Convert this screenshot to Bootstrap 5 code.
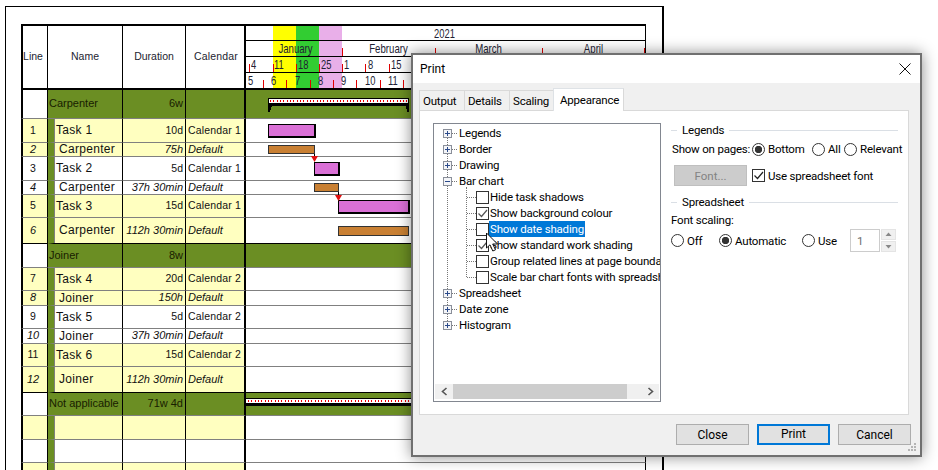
<!DOCTYPE html>
<html lang="en">
<head>
<meta charset="utf-8">
<title>Print</title>
<link href="https://cdn.jsdelivr.net/npm/bootstrap@5.3.0/dist/css/bootstrap.min.css" rel="stylesheet">
<style>
html,body{margin:0;background:#fff}
.stage{position:relative;width:938px;height:470px;overflow:hidden;background:#fff;font-family:"Liberation Sans",Arial,sans-serif;color:#111}
.sheet{margin:6px 0 0 5px;width:659px;height:520px;border:solid #000;border-width:1px 2px 0 1px;padding:17px 0 0 15px}
.sched{table-layout:fixed;width:625px;border-collapse:separate;border-spacing:0;font-size:10.5px;line-height:1}
.sched th,.sched td{padding:0 0 1px;border-bottom:1px solid #808080;border-right:1px solid #000;vertical-align:middle;white-space:nowrap;overflow:hidden;font-weight:400}
.sched thead th{border-top:2px solid #000;border-bottom:2px solid #000;text-align:center;color:#1c2430;padding-bottom:2px}
.sched thead th.c-chart{padding:0}
.c-line{border-left:2px solid #000;text-align:center;padding-right:4px!important}
.c-cal{padding-left:2px!important;border-right-width:2px!important;letter-spacing:.15px}
.c-dur{text-align:right;padding-right:2px!important}
.c-chart{background:#fff}
.c-name{font-size:12px;letter-spacing:.3px}
tr.h14{height:14px}tr.h15{height:15px}tr.h23{height:23px}tr.h24{height:24px}tr.h26{height:26px}tr.h29{height:29px}tr.h66{height:66px}
tr.yl td:not(.c-chart){background:#ffffc0}
tr.task .c-name{border-left:6px solid #6b8e23;box-shadow:inset 1px 0 #808080;padding-left:2px}
tr.res .c-name{border-left:6px solid #6b8e23;box-shadow:inset 1px 0 #808080;padding-left:5px}
tr.res td{font-style:italic;font-size:11px}
tr.res .c-name{font-style:normal;font-size:12px}
tr.res .c-cal{letter-spacing:0}
tr.grp td:not(.c-line){background:#6b8e23;color:#182000}
tr.grp .c-name{font-size:11px;letter-spacing:0;padding-left:1px}
tr.grp .c-dur{font-size:11px}
tr.blk td{border-bottom-color:#000}
.hdr{position:relative;height:62px;font-size:13px;text-align:left;color:#223}
.hdr svg{position:absolute;left:0;top:0}
.hrow{position:relative;display:flex;border-bottom:1px solid #000;height:16px;line-height:16px}
.hrow.yr{height:15px;line-height:15px;justify-content:center;padding-right:3px}
.hrow.yr span{display:block;transform:scaleX(.72)}
.hrow.last{border-bottom:0;height:15px;line-height:16px}
.hrow.mo{padding-left:3px}
.hrow.wk{padding-left:3px}
.mn{text-align:center;flex:none;transform:scaleX(.74)}
.w93{width:93px}.w107{width:107px}.w103{width:103px}
.dt{flex:none;width:23.33px;padding-left:2px;transform:scaleX(.72);transform-origin:2px 50%}
.bars{position:absolute;left:0;top:0;z-index:2;pointer-events:none}
/* dialog */
.dlg{position:absolute;left:411px;top:53px;width:511px;height:404px;z-index:3;border:2px solid #707070;background:#f0f0f0;box-shadow:0 0 14px rgba(0,0,0,.45);font-family:Roboto,"Liberation Sans",sans-serif;font-size:11.5px;letter-spacing:-.2px;color:#000;line-height:16px;white-space:nowrap}
.ttl{height:28px;background:#fff;padding:0 9px 0 7px;font-size:12px;letter-spacing:0}
.xbtn{border:0;background:none;padding:0;width:12px;height:12px;line-height:0}
.tabs{margin:6px 0 0 6px;padding:0;border:0;height:21px;flex-wrap:nowrap;position:relative;z-index:1}
.tabs .nav-link{margin:0;height:20px;margin-top:1px;padding:2px 4px 0 3px;border:1px solid #d9d9d9;border-bottom:0;border-right:0;border-radius:0;color:#000;background:#f0f0f0;font-size:11.5px;line-height:16px}
.tabs .nav-link.active{margin-top:-1px;padding:3px 7px 0 6px;background:#fff;border-right:1px solid #d9d9d9;height:23px}
.t44{width:45px}.t45{width:45px}.t43{width:44px}.t71{width:71px}
.pane{margin:0 11px 0 6px;height:305px;background:#fff;border:1px solid #d9d9d9;padding:12px 0 0 13px;gap:10px}
.tree{width:228px;height:279px;border:1px solid #828790;flex:none}
.trows{position:relative;height:259px;padding-top:1px;overflow:hidden;white-space:nowrap}
.vdot{position:absolute;border-left:1px dotted #777}
.vd1{left:13px;top:13px;height:184px}
.vd2{left:32px;top:63px;height:90px}
.tr16{height:16px;padding-left:9px}
.tr16.kid{padding-left:33px}
.pm{flex:none;width:9px;height:9px;border:1px solid #8a8f9a;background:#f4f5f8;line-height:0;position:relative}
.pm svg{position:absolute;left:0;top:0}
.hd{flex:none;width:5px;border-top:1px dotted #777;margin:0 1px 0 0}
.hd.w9{width:9px;margin:0}
.tick{flex:none;display:inline-block;width:13px;height:13px;border:1px solid #333;background:#fff;line-height:0}
.lbl{padding:0 1px;margin-left:0;height:16px}
.lbl.sel{background:#0078d7;color:#fff}
.sbar{height:15px;margin:1px;background:#f0f0f0;padding:0}
.sbtn{flex:none;width:18px;line-height:0;text-align:center}
.thumb{width:174px;background:#cdcdcd;height:15px}
.rcol{width:227px;flex:none}
.grph{height:14px;gap:5px;line-height:14px}
.grph i{display:block;border-top:1px solid #dadfe5}
.grph i.s{width:6px;flex:none}
.grph i.g{flex:1}
.fline{display:flex;align-items:center}
.form-check-input.rd{flex:none;width:13px;height:13px;margin:0;border:1px solid #333;background-color:#fff;background-image:none}
.form-check-input.rd:checked{background-color:#fff;border-color:#333;background-image:radial-gradient(circle,#333 3.4px,transparent 4px)}
.opt{display:flex;align-items:center;gap:3px;flex:none;margin:0}
.w80{width:80px;margin-left:1px;flex:none}.w60{width:60px}.w32{width:32px}.w48{width:48px}.w83{width:83px}
.m4{margin-top:4px;height:16px}
.m8{margin-top:8px}.m9{margin-top:9px}.m3{margin-top:3px}.m1{margin-top:1px}
.fbtn{width:73px;height:21px;margin:0 5px 0 3px;padding:0;background:#ccc;border:1px solid #bfbfbf;border-radius:0;color:#838383;font-size:11.5px;line-height:18px}
.fbtn:disabled{background:#ccc;border:1px solid #bfbfbf;color:#838383;opacity:1}
.spinv{width:30px;height:23px;border:1px solid #ccc;background:#fff;color:#6d6d6d;padding:0 0 0 6px;font-size:11.5px;border-radius:0;box-shadow:none}
.form-control.spinv:disabled{background:#fff}
.spn{margin-left:1px;width:15px;gap:1px}
.spn span{display:block;height:11px;background:#f0f0f0;border:1px solid #e4e4e4;line-height:0;text-align:center}
.foot{margin:9px 9px 0 0;gap:8px}
.dbtn{width:73px;height:21px;padding:0;background:#e1e1e1;border:1px solid #adadad;border-radius:0;color:#000;font-size:12px;line-height:18px;font-family:Roboto,"Liberation Sans",sans-serif}
.dbtn.def{border:2px solid #0078d7;line-height:17px}
.grip{position:absolute;right:3px;bottom:3px}
.cursor{position:absolute;left:485px;top:232px;z-index:4}
</style>
</head>
<body>
<div class="stage">
  <div class="sheet">
    <table class="sched">
      <colgroup><col width="27"><col width="75"><col width="63"><col width="60"><col width="400"></colgroup>
      <thead>
        <tr class="h66">
          <th class="c-line">Line</th><th>Name</th><th>Duration</th><th class="c-cal">Calendar</th>
          <th class="c-chart">
            <div class="hdr">
              <svg width="399" height="62" shape-rendering="crispEdges">
                <rect x="27" y="0" width="23" height="62" fill="#ffff00"/>
                <rect x="50" y="0" width="23" height="62" fill="#32cd32"/>
                <rect x="73" y="0" width="23" height="62" fill="#e9afe9"/>
                <g fill="#e00000">
                  <rect x="96" y="22" width="1" height="8"/><rect x="189" y="22" width="1" height="8"/><rect x="296" y="22" width="1" height="8"/><rect x="398" y="22" width="1" height="8"/>
                  <rect x="3" y="38" width="1" height="8"/><rect x="27" y="38" width="1" height="8"/><rect x="50" y="38" width="1" height="8"/><rect x="73" y="38" width="1" height="8"/><rect x="96" y="38" width="1" height="8"/><rect x="119" y="38" width="1" height="8"/><rect x="143" y="38" width="1" height="8"/>
                  <rect x="17" y="54" width="1" height="8"/><rect x="40" y="54" width="1" height="8"/><rect x="64" y="54" width="1" height="8"/><rect x="87" y="54" width="1" height="8"/><rect x="110" y="54" width="1" height="8"/><rect x="134" y="54" width="1" height="8"/><rect x="157" y="54" width="1" height="8"/>
                </g>
              </svg>
              <div class="hrow yr"><span>2021</span></div>
              <div class="hrow mo"><span class="mn w93">January</span><span class="mn w93">February</span><span class="mn w107">March</span><span class="mn w103">April</span></div>
              <div class="hrow wk"><span class="dt">4</span><span class="dt">11</span><span class="dt">18</span><span class="dt">25</span><span class="dt">1</span><span class="dt">8</span><span class="dt">15</span></div>
              <div class="hrow last"><span class="dt">5</span><span class="dt">6</span><span class="dt">7</span><span class="dt">8</span><span class="dt">9</span><span class="dt">10</span><span class="dt">11</span><span class="dt">12</span></div>
            </div>
          </th>
        </tr>
      </thead>
      <tbody>
        <tr class="h29 grp"><td class="c-line"></td><td class="c-name">Carpenter</td><td class="c-dur">6w</td><td class="c-cal"></td><td class="c-chart"></td></tr>
        <tr class="h24 yl task"><td class="c-line">1</td><td class="c-name">Task 1</td><td class="c-dur">10d</td><td class="c-cal">Calendar 1</td><td class="c-chart"></td></tr>
        <tr class="h14 yl res"><td class="c-line">2</td><td class="c-name">Carpenter</td><td class="c-dur">75h</td><td class="c-cal">Default</td><td class="c-chart"></td></tr>
        <tr class="h24 task"><td class="c-line">3</td><td class="c-name">Task 2</td><td class="c-dur">5d</td><td class="c-cal">Calendar 1</td><td class="c-chart"></td></tr>
        <tr class="h14 res"><td class="c-line">4</td><td class="c-name">Carpenter</td><td class="c-dur">37h 30min</td><td class="c-cal">Default</td><td class="c-chart"></td></tr>
        <tr class="h23 yl task"><td class="c-line">5</td><td class="c-name">Task 3</td><td class="c-dur">15d</td><td class="c-cal">Calendar 1</td><td class="c-chart"></td></tr>
        <tr class="h26 yl res blk"><td class="c-line">6</td><td class="c-name">Carpenter</td><td class="c-dur">112h 30min</td><td class="c-cal">Default</td><td class="c-chart"></td></tr>
        <tr class="h24 grp"><td class="c-line"></td><td class="c-name">Joiner</td><td class="c-dur">8w</td><td class="c-cal"></td><td class="c-chart"></td></tr>
        <tr class="h23 yl task"><td class="c-line">7</td><td class="c-name">Task 4</td><td class="c-dur">20d</td><td class="c-cal">Calendar 2</td><td class="c-chart"></td></tr>
        <tr class="h15 yl res"><td class="c-line">8</td><td class="c-name">Joiner</td><td class="c-dur">150h</td><td class="c-cal">Default</td><td class="c-chart"></td></tr>
        <tr class="h23 task"><td class="c-line">9</td><td class="c-name">Task 5</td><td class="c-dur">5d</td><td class="c-cal">Calendar 2</td><td class="c-chart"></td></tr>
        <tr class="h15 res"><td class="c-line">10</td><td class="c-name">Joiner</td><td class="c-dur">37h 30min</td><td class="c-cal">Default</td><td class="c-chart"></td></tr>
        <tr class="h23 yl task"><td class="c-line">11</td><td class="c-name">Task 6</td><td class="c-dur">15d</td><td class="c-cal">Calendar 2</td><td class="c-chart"></td></tr>
        <tr class="h26 yl res blk"><td class="c-line">12</td><td class="c-name">Joiner</td><td class="c-dur">112h 30min</td><td class="c-cal">Default</td><td class="c-chart"></td></tr>
        <tr class="h23 grp"><td class="c-line"></td><td class="c-name">Not applicable</td><td class="c-dur">71w 4d</td><td class="c-cal"></td><td class="c-chart"></td></tr>
        <tr class="h24 yl task"><td class="c-line"></td><td class="c-name"></td><td class="c-dur"></td><td class="c-cal"></td><td class="c-chart"></td></tr>
        <tr class="h23 task"><td class="c-line"></td><td class="c-name"></td><td class="c-dur"></td><td class="c-cal"></td><td class="c-chart"></td></tr>
        <tr class="h23 yl task"><td class="c-line"></td><td class="c-name"></td><td class="c-dur"></td><td class="c-cal"></td><td class="c-chart"></td></tr>
      </tbody>
    </table>
  </div>

  <svg class="bars" width="938" height="470">
    <g shape-rendering="crispEdges">
    <!-- Carpenter summary -->
    <rect x="268" y="98" width="141" height="8" fill="#000"/>
    <rect x="269" y="99" width="139" height="4" fill="#fff"/>
    <path d="M270 100h1v2h-1zM273 100h1v2h-1zM277 100h1v2h-1zM280 100h1v2h-1zM283 100h1v2h-1zM287 100h1v2h-1zM290 100h1v2h-1zM293 100h1v2h-1zM297 100h1v2h-1zM300 100h1v2h-1zM303 100h1v2h-1zM307 100h1v2h-1zM310 100h1v2h-1zM313 100h1v2h-1zM317 100h1v2h-1zM320 100h1v2h-1zM323 100h1v2h-1zM327 100h1v2h-1zM330 100h1v2h-1zM333 100h1v2h-1zM337 100h1v2h-1zM340 100h1v2h-1zM343 100h1v2h-1zM347 100h1v2h-1zM350 100h1v2h-1zM353 100h1v2h-1zM357 100h1v2h-1zM360 100h1v2h-1zM363 100h1v2h-1zM367 100h1v2h-1zM370 100h1v2h-1zM373 100h1v2h-1zM377 100h1v2h-1zM380 100h1v2h-1zM383 100h1v2h-1zM387 100h1v2h-1zM390 100h1v2h-1zM393 100h1v2h-1zM397 100h1v2h-1zM400 100h1v2h-1zM403 100h1v2h-1zM406 100h1v2h-1z" fill="#f00000"/>
    <path d="M268 104h4v2l-1 1v2l-1 1v2h-2zM409 104h-4v2l1 1v2l1 1v2h2z" fill="#000"/>
    <!-- Task 1 -->
    <rect x="268" y="124" width="48" height="14" fill="#000"/><rect x="269" y="125" width="45" height="11" fill="#da70d6"/>
    <rect x="268" y="145" width="47" height="9" fill="#333"/><rect x="269" y="146" width="45" height="7" fill="#c98033"/>
    <rect x="314" y="154" width="1" height="4" fill="#000"/>
    <!-- Task 2 -->
    <rect x="314" y="162" width="26" height="14" fill="#000"/><rect x="315" y="163" width="23" height="11" fill="#da70d6"/>
    <rect x="314" y="183" width="25" height="9" fill="#333"/><rect x="315" y="184" width="23" height="7" fill="#c98033"/>
    <rect x="338" y="192" width="1" height="3" fill="#000"/>
    <!-- Task 3 -->
    <rect x="338" y="200" width="72" height="14" fill="#000"/><rect x="339" y="201" width="69" height="11" fill="#da70d6"/>
    <rect x="338" y="226" width="71" height="10" fill="#333"/><rect x="339" y="227" width="69" height="8" fill="#c98033"/>
    <!-- Not applicable summary -->
    <rect x="246" y="398" width="399" height="8" fill="#000"/>
    <rect x="246" y="399" width="399" height="4" fill="#fff"/>
    <path d="M248 400h1v2h-1zM251 400h1v2h-1zM255 400h1v2h-1zM258 400h1v2h-1zM261 400h1v2h-1zM265 400h1v2h-1zM268 400h1v2h-1zM271 400h1v2h-1zM275 400h1v2h-1zM278 400h1v2h-1zM281 400h1v2h-1zM285 400h1v2h-1zM288 400h1v2h-1zM291 400h1v2h-1zM295 400h1v2h-1zM298 400h1v2h-1zM301 400h1v2h-1zM305 400h1v2h-1zM308 400h1v2h-1zM311 400h1v2h-1zM315 400h1v2h-1zM318 400h1v2h-1zM321 400h1v2h-1zM325 400h1v2h-1zM328 400h1v2h-1zM331 400h1v2h-1zM335 400h1v2h-1zM338 400h1v2h-1zM341 400h1v2h-1zM345 400h1v2h-1zM348 400h1v2h-1zM351 400h1v2h-1zM355 400h1v2h-1zM358 400h1v2h-1zM361 400h1v2h-1zM365 400h1v2h-1zM368 400h1v2h-1zM371 400h1v2h-1zM375 400h1v2h-1zM378 400h1v2h-1zM381 400h1v2h-1zM385 400h1v2h-1zM388 400h1v2h-1zM391 400h1v2h-1zM395 400h1v2h-1zM398 400h1v2h-1zM401 400h1v2h-1zM405 400h1v2h-1zM408 400h1v2h-1z" fill="#f00000"/>
    </g>
    <path d="M311 156h7l-3.500 6z" fill="#e01010"/>
    <path d="M335 195h7l-3.500 6z" fill="#e01010"/>
  </svg>

  <div class="dlg d-flex flex-column">
    <div class="ttl d-flex align-items-center justify-content-between">
      <span>Print</span>
      <button class="xbtn" type="button" aria-label="Close"><svg width="12" height="12" viewBox="0 0 12 12"><path d="M.5.500l11 11M11.500.500l-11 11" stroke="#111" stroke-width="1" fill="none"/></svg></button>
    </div>
    <ul class="nav nav-tabs tabs">
      <li class="nav-item"><a class="nav-link t44" href="#">Output</a></li>
      <li class="nav-item"><a class="nav-link t45" href="#">Details</a></li>
      <li class="nav-item"><a class="nav-link t43" href="#">Scaling</a></li>
      <li class="nav-item"><a class="nav-link active t71" href="#">Appearance</a></li>
    </ul>
    <div class="pane d-flex">
      <div class="tree d-flex flex-column">
        <div class="trows">
          <span class="vdot vd1"></span><span class="vdot vd2"></span>
          <div class="tr16 d-flex align-items-center"><span class="pm"><svg width="7" height="7"><path d="M1 3.500h5M3.500 1v5" stroke="#2b4a8b" fill="none"/></svg></span><span class="hd"></span><span class="lbl">Legends</span></div>
          <div class="tr16 d-flex align-items-center"><span class="pm"><svg width="7" height="7"><path d="M1 3.500h5M3.500 1v5" stroke="#2b4a8b" fill="none"/></svg></span><span class="hd"></span><span class="lbl">Border</span></div>
          <div class="tr16 d-flex align-items-center"><span class="pm"><svg width="7" height="7"><path d="M1 3.500h5M3.500 1v5" stroke="#2b4a8b" fill="none"/></svg></span><span class="hd"></span><span class="lbl">Drawing</span></div>
          <div class="tr16 d-flex align-items-center"><span class="pm"><svg width="7" height="7"><path d="M1 3.500h5" stroke="#2b4a8b" fill="none"/></svg></span><span class="hd"></span><span class="lbl">Bar chart</span></div>
          <div class="tr16 kid d-flex align-items-center"><span class="hd w9"></span><span class="tick"></span><span class="lbl">Hide task shadows</span></div>
          <div class="tr16 kid d-flex align-items-center"><span class="hd w9"></span><span class="tick"><svg width="11" height="11"><path d="M1.500 5.500l3 3 5.500-6.500" stroke="#555" stroke-width="1.200" fill="none"/></svg></span><span class="lbl">Show background colour</span></div>
          <div class="tr16 kid d-flex align-items-center"><span class="hd w9"></span><span class="tick"></span><span class="lbl sel">Show date shading</span></div>
          <div class="tr16 kid d-flex align-items-center"><span class="hd w9"></span><span class="tick"><svg width="11" height="11"><path d="M1.500 5.500l3 3 5.500-6.500" stroke="#555" stroke-width="1.200" fill="none"/></svg></span><span class="lbl">Show standard work shading</span></div>
          <div class="tr16 kid d-flex align-items-center"><span class="hd w9"></span><span class="tick"></span><span class="lbl">Group related lines at page bounda</span></div>
          <div class="tr16 kid d-flex align-items-center"><span class="hd w9"></span><span class="tick"></span><span class="lbl">Scale bar chart fonts with spreadsh</span></div>
          <div class="tr16 d-flex align-items-center"><span class="pm"><svg width="7" height="7"><path d="M1 3.500h5M3.500 1v5" stroke="#2b4a8b" fill="none"/></svg></span><span class="hd"></span><span class="lbl">Spreadsheet</span></div>
          <div class="tr16 d-flex align-items-center"><span class="pm"><svg width="7" height="7"><path d="M1 3.500h5M3.500 1v5" stroke="#2b4a8b" fill="none"/></svg></span><span class="hd"></span><span class="lbl">Date zone</span></div>
          <div class="tr16 d-flex align-items-center"><span class="pm"><svg width="7" height="7"><path d="M1 3.500h5M3.500 1v5" stroke="#2b4a8b" fill="none"/></svg></span><span class="hd"></span><span class="lbl">Histogram</span></div>
        </div>
        <div class="sbar d-flex align-items-center justify-content-between">
          <span class="sbtn"><svg width="7" height="9"><path d="M5.500 1l-4 3.500 4 3.500" stroke="#555" stroke-width="1.600" fill="none"/></svg></span>
          <span class="thumb"></span>
          <span class="flex-grow-1"></span>
          <span class="sbtn"><svg width="7" height="9"><path d="M1.500 1l4 3.500-4 3.500" stroke="#555" stroke-width="1.600" fill="none"/></svg></span>
        </div>
      </div>
      <div class="rcol">
        <div class="grph d-flex align-items-center"><i class="s"></i><span>Legends</span><i class="g"></i></div>
        <div class="fline m4">
          <span class="w80">Show on pages:</span>
          <label class="opt w60"><input class="form-check-input rd" type="radio" name="pg" checked>Bottom</label>
          <label class="opt w32"><input class="form-check-input rd" type="radio" name="pg">All</label>
          <label class="opt"><input class="form-check-input rd" type="radio" name="pg">Relevant</label>
        </div>
        <div class="fline m8">
          <button class="btn fbtn" type="button" disabled>Font...</button>
          <span class="opt"><span class="tick"><svg width="11" height="11"><path d="M1.500 5.500l3 3 5.500-6.500" stroke="#222" stroke-width="1.200" fill="none"/></svg></span>Use spreadsheet font</span>
        </div>
        <div class="grph d-flex align-items-center m9"><i class="s"></i><span>Spreadsheet</span><i class="g"></i></div>
        <div class="m3">Font scaling:</div>
        <div class="fline m1">
          <label class="opt w48"><input class="form-check-input rd" type="radio" name="fs">Off</label>
          <label class="opt w83"><input class="form-check-input rd" type="radio" name="fs" checked>Automatic</label>
          <label class="opt w48"><input class="form-check-input rd" type="radio" name="fs">Use</label>
          <input class="form-control spinv" type="text" value="1" disabled>
          <div class="spn d-flex flex-column">
            <span><svg width="7" height="9"><path d="M.500 6h6l-3-3.500z" fill="#888"/></svg></span>
            <span><svg width="7" height="9"><path d="M.500 3h6l-3 3.500z" fill="#888"/></svg></span>
          </div>
        </div>
      </div>
    </div>
    <div class="foot d-flex justify-content-end">
      <button class="btn dbtn" type="button">Close</button>
      <button class="btn dbtn def" type="button">Print</button>
      <button class="btn dbtn" type="button">Cancel</button>
    </div>
    <svg class="grip" width="9" height="9" fill="#b4b4b4"><rect x="6" y="0" width="2" height="2"/><rect x="3" y="3" width="2" height="2"/><rect x="6" y="3" width="2" height="2"/><rect x="0" y="6" width="2" height="2"/><rect x="3" y="6" width="2" height="2"/><rect x="6" y="6" width="2" height="2"/></svg>
  </div>

  <svg class="cursor" width="16" height="22" viewBox="0 0 16 22"><path d="M1.500 1v15l3.500-3.200 2.800 6.200 2.700-1.200-2.800-5.800h4.800z" fill="#fff" stroke="#111" stroke-width="1"/></svg>
</div>
<script src="https://cdn.jsdelivr.net/npm/bootstrap@5.3.0/dist/js/bootstrap.bundle.min.js"></script>
</body>
</html>
